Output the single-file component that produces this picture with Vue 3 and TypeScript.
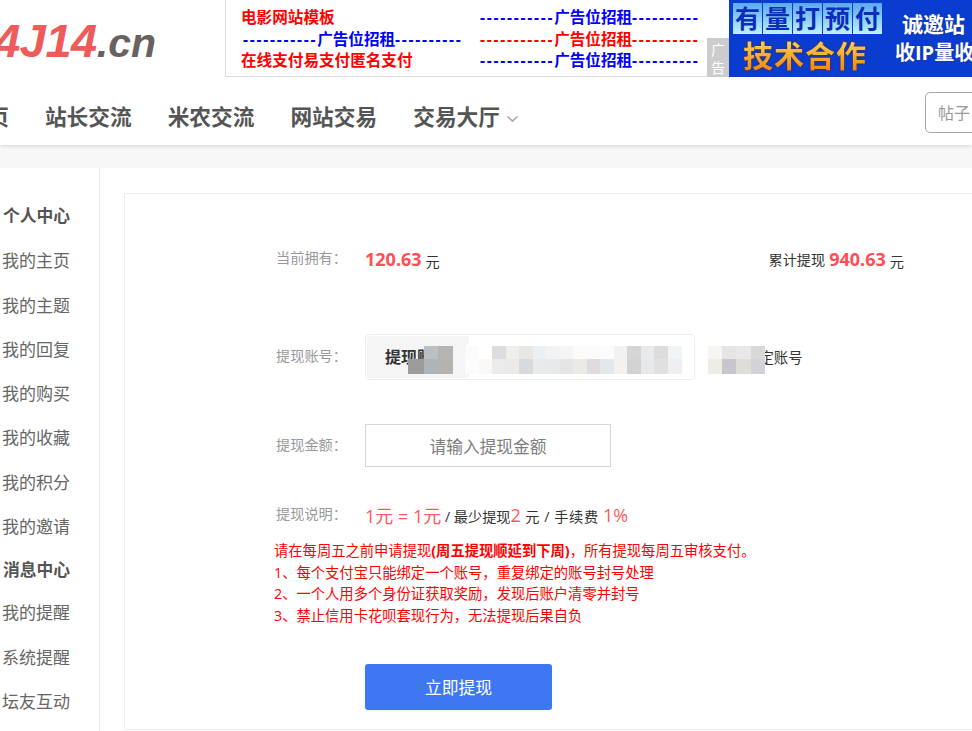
<script setup lang="ts">
const sideItems = [
  { text: '个人中心', head: true }, { text: '我的主页' }, { text: '我的主题' }, { text: '我的回复' },
  { text: '我的购买' }, { text: '我的收藏' }, { text: '我的积分' }, { text: '我的邀请' },
  { text: '消息中心', head: true }, { text: '我的提醒' }, { text: '系统提醒' }, { text: '坛友互动' },
]
const navItems = ['站长交流', '米农交流', '网站交易']
const payTiles = ['有', '量', '打', '预', '付']

interface Block { x: number; y: number; w: number; h: number; c: string }
function strip(x0: number, step: number, y: number, h: number, colors: string[]): Block[] {
  return colors.map((c, i) => ({ x: x0 + i * step, y, w: step + 0.5, h, c }))
}
const blocks: Block[] = [
  ...strip(424, 14, 346, 13, ['#bcc0c3', '#b4b4b4']),
  ...strip(407.5, 16.5, 359, 15, ['#9c9c9c']),
  ...strip(424, 14, 359, 15, ['#adb5b9', '#b5b3af']),
  ...strip(465, 13.5, 346, 13, ['#fbfbfb', '#ffffff', '#dcdddf', '#efefee', '#e8e7e5', '#ecf0f2', '#f2f3f2', '#f4f5f4', '#fbfbfb', '#fafbfa', '#fbfcfb', '#f3f2f0', '#d5d5d6', '#e8e9ea', '#dcdcdc', '#f0f4f7']),
  ...strip(465, 13.5, 359, 15, ['#fcfcfc', '#fbf9f8', '#ebebeb', '#ebeae9', '#d9dadd', '#e7ebee', '#e8e9ea', '#e5e5e5', '#eceae6', '#dfdcdf', '#e4e7ec', '#f3f2f0', '#d2d2d6', '#e6e8ea', '#e0e0e0', '#f0eff0']),
  ...strip(708, 14.2, 346, 13, ['#f8f4f1', '#e5e5e5', '#e8e8e8', '#d8d8d8']),
  ...strip(708, 14.2, 359, 15, ['#efebe7', '#c8c6cc', '#e0dcd7', '#d2d2d8']),
]
function blockStyle(b: Block) {
  return { left: b.x + 'px', top: b.y + 'px', width: b.w + 'px', height: b.h + 'px', background: b.c }
}
</script>

<template>
  <div class="page">
    <header class="header">
      <div class="top">
        <div class="logo">
          <span class="logo-num">14J14</span><span class="logo-cn">.cn</span>
        </div>
        <div class="ads">
          <div class="ad-cell red">电影网站模板</div>
          <div class="ad-cell blue"><span class="dash">-----------</span>广告位招租<span class="dash">----------</span></div>
          <div class="ad-cell blue ad-in"><span class="dash">-----------</span>广告位招租<span class="dash">----------</span></div>
          <div class="ad-cell red"><span class="dash">-----------</span>广告位招租<span class="dash">----------</span></div>
          <div class="ad-cell red">在线支付易支付匿名支付</div>
          <div class="ad-cell blue"><span class="dash">-----------</span>广告位招租<span class="dash">----------</span></div>
          <div class="ad-tag">广<br />告</div>
        </div>
        <div class="banner">
          <div class="banner-left">
            <div class="tiles">
              <span v-for="t in payTiles" :key="t" class="tile">{{ t }}</span>
            </div>
            <div class="tech">技术合作</div>
          </div>
          <div class="banner-right">
            <div class="invite">诚邀站</div>
            <div class="invite invite-2">收IP量收</div>
          </div>
        </div>
      </div>
      <nav class="nav">
        <a class="nav-item nav-first">首页</a>
        <a v-for="n in navItems" :key="n" class="nav-item">{{ n }}</a>
        <a class="nav-item nav-drop">
          交易大厅
          <svg class="chev" width="13" height="8" viewBox="0 0 13 8">
            <path d="M1.5 1.5 L6.5 6.2 L11.5 1.5" fill="none" stroke="#aaa" stroke-width="1.6" />
          </svg>
        </a>
        <div class="search"><span>帖子</span></div>
      </nav>
    </header>

    <main class="main">
      <aside class="side">
        <div v-for="s in sideItems" :key="s.text" class="side-item" :class="{ head: s.head }">{{ s.text }}</div>
      </aside>
      <section class="content">
        <div class="card">
          <div class="row row-own">
            <span class="label">当前拥有：</span>
            <span class="money">120.63</span><span class="unit">元</span>
            <span class="total">累计提现 <span class="money">940.63</span><span class="unit">元</span></span>
          </div>
          <div class="row row-account">
            <span class="label">提现账号：</span>
            <div class="account">
              <div class="account-label">提现账号</div>
            </div>
            <span class="bind">绑定账号</span>
          </div>
          <div class="row row-amount">
            <span class="label">提现金额：</span>
            <div class="amount">请输入提现金额</div>
          </div>
          <div class="row row-desc">
            <span class="label">提现说明：</span>
            <span class="rate">1元 = 1元</span>
            <span class="desc">&nbsp;/ 最少提现</span><span class="rate">2</span>
            <span class="desc desc-fee">&nbsp;元 / 手续费&nbsp;</span><span class="rate">1%</span>
          </div>
          <div class="notes">
            <p>请在每周五之前申请提现<b>(周五提现顺延到下周)</b>，所有提现每周五审核支付。</p>
            <p>1、每个支付宝只能绑定一个账号，重复绑定的账号封号处理</p>
            <p>2、一个人用多个身份证获取奖励，发现后账户清零并封号</p>
            <p>3、禁止信用卡花呗套现行为，无法提现后果自负</p>
          </div>
          <button class="submit" type="button">立即提现</button>
        </div>
      </section>
    </main>

    <div class="wash wash-a"></div>
    <div class="wash wash-b"></div>
    <div v-for="(b, i) in blocks" :key="i" class="mosaic" :style="blockStyle(b)"></div>
  </div>
</template>

<style scoped>
.page {
  position: relative;
  width: 972px;
  height: 731px;
  overflow: hidden;
  background: #f7f7f7;
  font-family: "Open Sans", "Noto Sans CJK SC", sans-serif;
  color: #333;
}
.header {
  height: 145px;
  background: #fff;
  box-shadow: 0 1px 4px rgba(0, 0, 0, 0.14);
  position: relative;
}
.top {
  display: flex;
  height: 77px;
}
.logo {
  width: 225px;
  flex: none;
  padding-right: 69px;
  box-sizing: border-box;
  display: flex;
  justify-content: flex-end;
  align-items: baseline;
  overflow: hidden;
  font-family: "Liberation Sans", sans-serif;
  font-weight: 700;
  font-style: italic;
  line-height: 77px;
}
.logo-num {
  font-size: 47px;
  color: #ef5a5a;
  letter-spacing: -0.5px;
  white-space: nowrap;
  position: relative;
  top: 2px;
}
.logo-cn {
  font-size: 41px;
  color: #676260;
  position: relative;
  top: 2px;
}
.ads {
  width: 504px;
  flex: none;
  box-sizing: border-box;
  border-left: 1px solid #ddd;
  border-bottom: 1px solid #ddd;
  padding: 7px 0 0 15px;
  position: relative;
  display: grid;
  grid-template-columns: 239px 1fr;
  grid-auto-rows: 21.7px;
  font-size: 15.6px;
  font-weight: 700;
  line-height: 21.7px;
  white-space: nowrap;
}
.ad-cell.red { color: #f00; }
.ad-cell.blue { color: #00f; }
.ad-in { padding-left: 2px; }
.dash { letter-spacing: 1.72px; }
.ad-tag {
  position: absolute;
  right: 0;
  bottom: -1px;
  width: 22px;
  height: 39px;
  background: #ccc;
  color: #fff;
  font-size: 14px;
  font-weight: 400;
  line-height: 18px;
  text-align: center;
  padding-top: 3px;
  box-sizing: border-box;
}
.banner {
  flex: 1;
  background: #0a3ccf;
  display: flex;
  overflow: hidden;
  white-space: nowrap;
  font-weight: 700;
}
.banner-left {
  width: 155px;
  flex: none;
  padding: 3px 0 0 4px;
  box-sizing: border-box;
}
.tiles {
  display: flex;
  gap: 1px;
}
.tile {
  width: 29px;
  height: 31px;
  background: linear-gradient(#5aa8f2, #bdf2ff);
  color: #0b2db8;
  font-size: 25px;
  line-height: 30px;
  text-align: center;
}
.tech {
  font-size: 30px;
  line-height: 38px;
  margin-top: 3px;
  padding-left: 10px;
  letter-spacing: 1px;
  background: linear-gradient(#ffd860, #ee7d08);
  -webkit-background-clip: text;
  background-clip: text;
  color: transparent;
  filter: drop-shadow(0 0 1px #5a2a00);
}
.banner-right {
  padding-top: 10px;
  margin-left: 11px;
}
.invite {
  font-size: 21px;
  line-height: 28px;
  color: #fff;
  margin-left: 7px;
  text-shadow: 0 0 2px #203a90;
}
.invite-2 {
  margin-left: 0;
  font-size: 20px;
  line-height: 29px;
}
.nav {
  height: 68px;
  display: flex;
  align-items: center;
  gap: 36px;
  margin-left: -34.5px;
  padding-top: 12px;
  font-size: 21.7px;
  font-weight: 700;
  color: #555;
  white-space: nowrap;
  box-sizing: border-box;
}
.nav-item {
  line-height: 30px;
}
.nav-drop {
  display: flex;
  align-items: center;
  gap: 6px;
}
.chev {
  margin-top: 3px;
}
.search {
  position: absolute;
  left: 925px;
  top: 92px;
  width: 80px;
  height: 41px;
  box-sizing: border-box;
  border: 1px solid #a8a8a8;
  border-radius: 5px;
  padding-left: 12px;
  font-size: 16px;
  font-weight: 400;
  line-height: 41px;
  color: #999;
}
.main {
  margin-top: 23px;
  height: 563px;
  background: #fff;
  display: flex;
}
.side {
  width: 100px;
  flex: none;
  box-sizing: border-box;
  border-right: 1px solid #e6e6e6;
  padding: 26px 0 0 2px;
  overflow: hidden;
}
.side-item {
  height: 44.25px;
  line-height: 45px;
  font-size: 17px;
  color: #666;
  white-space: nowrap;
}
.side-item:nth-child(10) {
  margin-top: -2px;
}
.side-item.head {
  font-size: 16.8px;
  line-height: 44px;
  font-weight: 700;
  color: #555;
  padding-left: 1px;
}
.content {
  flex: 1;
  padding: 25px 0 0 24px;
  min-width: 0;
}
.card {
  width: 860px;
  height: 537px;
  box-sizing: border-box;
  border: 1px solid #eee;
  padding: 51px 0 0 151px;
}
.row {
  display: flex;
  align-items: center;
  white-space: nowrap;
}
.label {
  width: 89px;
  flex: none;
  font-size: 14.2px;
  color: #999;
  padding-bottom: 4px;
}
.row-own {
  height: 28px;
  font-size: 14.2px;
  width: 628px;
}
.money {
  font-size: 18px;
  font-weight: 700;
  color: #ff4d55;
  margin-right: 4px;
}
.unit {
  font-size: 14.2px;
  color: #333;
  padding-top: 3px;
}
.total {
  margin-left: auto;
  font-size: 14.2px;
  color: #333;
  display: flex;
  align-items: center;
  gap: 4px;
}
.total .money {
  margin-right: 0;
}
.row-account {
  height: 46px;
  margin-top: 61px;
}
.account {
  width: 330px;
  height: 46px;
  box-sizing: border-box;
  border: 1px solid #eee;
  border-radius: 4px;
  padding: 1px;
}
.account-label {
  width: 102px;
  height: 42px;
  background: #f5f5f5;
  border-radius: 3px;
  padding-left: 18px;
  box-sizing: border-box;
  font-size: 16px;
  font-weight: 700;
  line-height: 42px;
  color: #333;
}
.bind {
  margin-left: 50px;
  font-size: 14.4px;
  color: #333;
  padding-bottom: 1px;
}
.row-amount {
  height: 43px;
  margin-top: 44px;
}
.amount {
  width: 246px;
  height: 43px;
  box-sizing: border-box;
  border: 1px solid #d5d5d5;
  font-size: 16.7px;
  line-height: 44px;
  text-align: center;
  color: #7d7d7d;
}
.row-desc {
  height: 26px;
  margin-top: 35px;
}
.rate {
  font-size: 18px;
  font-weight: 400;
  color: #ff5a60;
}
.desc {
  font-size: 14.2px;
  color: #333;
  padding-top: 2px;
}
.desc-fee {
  letter-spacing: 0.6px;
}
.notes {
  margin: 12px 0 0 -2px;
  font-size: 14.3px;
  line-height: 21.6px;
  color: #f00;
}
.notes p {
  margin: 0;
  white-space: nowrap;
}
.submit {
  display: block;
  width: 187px;
  height: 46px;
  margin: 38px 0 0 89px;
  border: none;
  border-radius: 3px;
  background: #3d78f2;
  color: #fff;
  font: inherit;
  font-size: 16.8px;
}
.wash {
  position: absolute;
  background: #fff;
  border-radius: 8px;
}
.wash-a {
  left: 465px;
  top: 342px;
  width: 228px;
  height: 33px;
}
.wash-b {
  left: 697px;
  top: 345px;
  width: 68px;
  height: 30px;
}
.mosaic {
  position: absolute;
}
</style>
